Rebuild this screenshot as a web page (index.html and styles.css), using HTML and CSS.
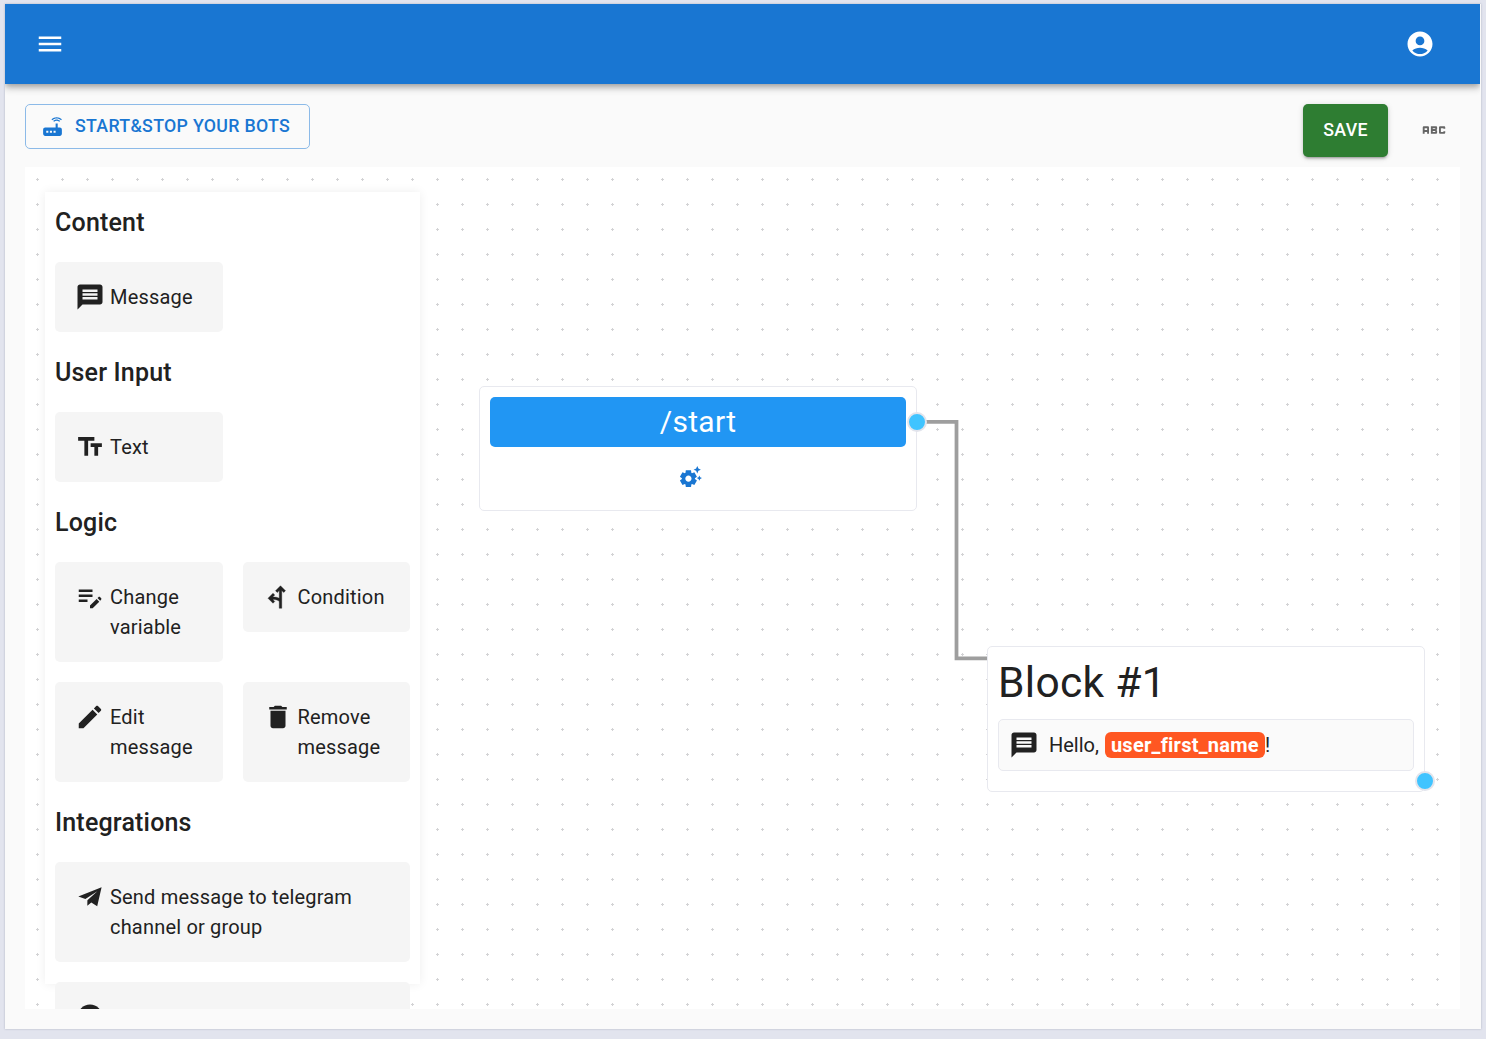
FILE: index.html
```html
<!DOCTYPE html>
<html lang="en">
<head>
<meta charset="utf-8">
<title>Bot editor</title>
<link rel="stylesheet" href="styles.css">
</head>
<body>
<svg class="sprite" aria-hidden="true">
  <symbol id="message" viewBox="0 0 24 24"><path d="M20 2H4c-1.1 0-1.99.9-1.99 2L2 22l4-4h14c1.1 0 2-.9 2-2V4c0-1.1-.9-2-2-2zm-2 12H6v-2h12v2zm0-3H6V9h12v2zm0-3H6V6h12v2z"/></symbol>
</svg>
<div class="app">
  <header class="appbar">
    <svg class="icon" viewBox="0 0 24 24"><path d="M3 18h18v-2H3v2zm0-5h18v-2H3v2zm0-7v2h18V6H3z"/></svg>
    <svg class="icon" viewBox="0 0 24 24"><path d="M12 2C6.48 2 2 6.48 2 12s4.48 10 10 10 10-4.48 10-10S17.52 2 12 2zm0 4c1.93 0 3.5 1.57 3.5 3.5S13.93 13 12 13s-3.500-1.570-3.500-3.500S10.070 6 12 6zm0 14c-2.030 0-4.430-.820-6.140-2.880C7.550 15.800 9.680 15 12 15s4.450.800 6.140 2.120C16.430 19.180 14.030 20 12 20z"/></svg>
  </header>
  <div class="toolbar">
    <button class="btn btn-outlined">
      <svg class="icon icon-sm" viewBox="0 0 24 24"><path d="M20.2 5.9l.8-.8C19.6 3.7 17.8 3 16 3s-3.6.7-5 2.100l.8.8C13 4.800 14.500 4.200 16 4.200s3 .6 4.200 1.700zm-.9.8c-.9-.9-2.100-1.400-3.300-1.400s-2.400.5-3.300 1.400l.8.8c.7-.7 1.600-1 2.500-1 .9 0 1.800.3 2.500 1l.8-.8zM19 13h-2V9h-2v4H5c-1.100 0-2 .9-2 2v4c0 1.100.9 2 2 2h14c1.100 0 2-.9 2-2v-4c0-1.100-.9-2-2-2zM8 18H6v-2h2v2zm3.500 0h-2v-2h2v2zm3.500 0h-2v-2h2v2z"/></svg>
      <span>START&amp;STOP YOUR BOTS</span>
    </button>
    <div class="actions">
      <button class="btn btn-save">SAVE</button>
      <svg class="icon icon-abc" viewBox="0 0 24 24"><path d="M21 11h-1.500v-.5h-2v3h2V13H21v1c0 .55-.45 1-1 1h-3c-.55 0-1-.45-1-1v-4c0-.55.45-1 1-1h3c.55 0 1 .45 1 1v1zM8 10v5H6.500v-1.500h-2V15H3v-5c0-.55.45-1 1-1h3c.55 0 1 .45 1 1zm-1.500.5h-2V12h2v-1.500zM13.500 12c.55 0 1 .45 1 1v1c0 .55-.45 1-1 1h-4V9h4c.55 0 1 .45 1 1v1c0 .55-.45 1-1 1zM11 10.500v.75h2v-.75h-2zm2 2.250h-2v.75h2v-.75z"/></svg>
    </div>
  </div>
  <main class="canvas">
    <svg class="grid" width="100%" height="100%">
      <defs><pattern id="dots" width="25" height="25" patternUnits="userSpaceOnUse"><path d="M12 11h1v3h-1zM11 12h3v1h-3z" fill="#d3d3d5"/></pattern></defs>
      <rect width="100%" height="100%" fill="url(#dots)"/>
    </svg>

    <aside class="panel">
      <h6>Content</h6>
      <div class="cards">
        <div class="card"><svg class="icon"><use href="#message"/></svg><span>Message</span></div>
      </div>
      <h6>User Input</h6>
      <div class="cards">
        <div class="card"><svg class="icon" viewBox="0 0 24 24"><path d="M2.500 4v3h5v12h3V7h5V4h-13zm19 5h-9v3h3v7h3v-7h3V9z"/></svg><span>Text</span></div>
      </div>
      <h6>Logic</h6>
      <div class="cards">
        <div class="card"><svg class="icon" viewBox="0 0 24 24"><path d="M3 10h11v2H3v-2zm0-2h11V6H3v2zm0 8h7v-2H3v2zm15.010-3.130.71-.71c.39-.39 1.020-.39 1.410 0l.71.71c.39.39.39 1.020 0 1.410l-.71.71-2.120-2.120zm-.71.71-5.300 5.300V21h2.120l5.300-5.300-2.120-2.120z"/></svg><span>Change variable</span></div>
        <div class="card"><svg class="icon" viewBox="0 0 24 24"><path d="M13 21V15.600C12.100 14.500 10.300 14 7.830 14l1.580 1.590L8 17l-4-4 4-4 1.410 1.410L7.830 12c2.200 0 3.900.3 5.170 1V6.830l-1.590 1.580L10 7l4-4 4 4-1.410 1.410L15 6.830V21z" stroke="currentColor" stroke-width=".3"/></svg><span>Condition</span></div>
        <div class="card"><svg class="icon" viewBox="0 0 24 24"><path d="M3 17.250V21h3.750L17.810 9.940l-3.750-3.750L3 17.250zM20.710 7.040c.39-.39.39-1.020 0-1.410l-2.340-2.340c-.39-.39-1.020-.39-1.410 0l-1.830 1.830 3.750 3.750 1.830-1.830z"/></svg><span>Edit message</span></div>
        <div class="card"><svg class="icon" viewBox="0 0 24 24"><path d="M6 19c0 1.100.9 2 2 2h8c1.100 0 2-.9 2-2V7H6v12zM19 4h-3.500l-1-1h-5l-1 1H5v2h14V4z"/></svg><span>Remove message</span></div>
      </div>
      <h6>Integrations</h6>
      <div class="cards">
        <div class="card wide"><svg class="icon" viewBox="0 0 30 30"><path d="M3.300 14.500 26.600 5.300 22.200 24.200 16.300 20.400 12.300 23.700 12.400 18.300 22.300 9.300 10.400 16.900z"/></svg><span>Send message to telegram channel or group</span></div>
        <div class="card wide"><svg class="icon" viewBox="0 0 24 24"><circle cx="12" cy="12" r="10"/></svg></div>
      </div>
    </aside>

    <svg class="edge" width="72" height="244"><path d="M0 4.800H39.500V241.300H70" fill="none" stroke="#9e9e9e" stroke-width="3.750"/></svg>

    <section class="node node-start">
      <div class="command">/start</div>
      <svg class="icon icon-sm suggest" viewBox="0 0 24 24"><path d="M17.410 6.590 15 5.500l2.410-1.090L18.500 2l1.090 2.410L22 5.500l-2.410 1.090L18.500 9l-1.090-2.410zm3.870 6.130L20.500 11l-.78 1.720-1.720.78 1.720.78.78 1.720.78-1.720L23 13.500l-1.720-.78zm-5.040 1.650 1.940 1.470-2.500 4.330-2.240-.94c-.2.13-.42.26-.64.37l-.3 2.400h-5l-.3-2.410c-.22-.11-.43-.23-.64-.37l-2.240.94-2.500-4.330 1.940-1.470c-.01-.11-.01-.24-.01-.36s0-.25.01-.37l-1.940-1.470 2.500-4.330 2.240.94c.2-.13.42-.26.64-.37L7.500 6h5l.3 2.410c.22.11.43.23.64.37l2.240-.94 2.500 4.330-1.940 1.470c.01.12.01.24.01.37s0 .24-.01.36zM13 14c0-1.660-1.340-3-3-3s-3 1.340-3 3 1.340 3 3 3 3-1.340 3-3z"/></svg>
      <i class="handle handle-start"></i>
    </section>

    <section class="node node-block">
      <h4>Block #1</h4>
      <div class="reply">
        <svg class="icon"><use href="#message"/></svg>
        <p>Hello, <b class="tag">user_first_name</b>!</p>
      </div>
      <i class="handle handle-block"></i>
    </section>
  </main>
</div>
</body>
</html>
```
FILE: styles.css
```css
* { box-sizing: border-box; }

body {
  margin: 0;
  height: 1039px;
  padding: 4px 5px 10px;
  overflow: hidden;
  background: #e2e4ee;
  color: #212121;
  font: 400 20px/30px Roboto, sans-serif;
  letter-spacing: 0.00938em;
}

h4, h6, p { margin: 0; }

.sprite { position: absolute; width: 0; height: 0; }

.app {
  height: 1025px;
  display: flex;
  flex-direction: column;
  background: #fafafa;
  box-shadow: 0 0 2px rgba(60, 64, 90, 0.3);
}

.icon { width: 30px; height: 30px; flex: none; fill: currentColor; }
.icon-sm { width: 25px; height: 25px; }

.appbar {
  height: 80px;
  flex: none;
  margin-right: 1px;
  padding: 0 45px 0 30px;
  display: flex;
  align-items: center;
  justify-content: space-between;
  background: #1976d2;
  color: #fff;
  box-shadow: 0 2.5px 5px -1px rgba(0, 0, 0, 0.2), 0 5px 6px rgba(0, 0, 0, 0.14), 0 1px 12px rgba(0, 0, 0, 0.12);
  clip-path: inset(0 0 -30px 0);
}

.toolbar {
  height: 83px;
  flex: none;
  padding: 20px 32px 0 20px;
  display: flex;
  align-items: flex-start;
  justify-content: space-between;
}

.actions { display: flex; align-items: center; gap: 31px; }

.btn {
  display: flex;
  align-items: center;
  justify-content: center;
  border: 0;
  border-radius: 5px;
  font: 500 17.75px/33px Roboto, sans-serif;
  letter-spacing: 0.3px;
  white-space: nowrap;
}

.btn-outlined {
  width: 285px;
  height: 45px;
  gap: 10px;
  padding: 0 0 0 14px;
  justify-content: flex-start;
  border: 1px solid #8cbae8;
  background: transparent;
  color: #1976d2;
}

.btn-save {
  width: 85px;
  height: 53px;
  background: #2e7d32;
  color: #fff;
  box-shadow: 0 3px 2px -2px rgba(0, 0, 0, 0.2), 0 2px 3px rgba(0, 0, 0, 0.14), 0 1px 6px rgba(0, 0, 0, 0.12);
}

.icon-abc { margin-bottom: 2px; color: #666; }

.canvas {
  position: relative;
  width: 1435px;
  height: 842px;
  margin-left: 20px;
  overflow: hidden;
  background: #fff;
}

.grid { position: absolute; inset: 0; }

.panel {
  position: relative;
  width: 375px;
  height: 792px;
  margin: 25px 0 0 20px;
  padding: 10px;
  background: #fff;
  box-shadow: 0 0 10px rgba(0, 0, 0, 0.07);
}

h6 {
  height: 40px;
  font-size: 25px;
  font-weight: 500;
  line-height: 42px;
  letter-spacing: 0.0075em;
}

.cards {
  display: grid;
  grid-template-columns: 1fr 1fr;
  align-items: start;
  gap: 20px;
  padding: 20px 0;
}

.card {
  display: flex;
  gap: 5px;
  padding: 20px;
  border-radius: 5px;
  background: #f5f5f5;
}

.wide { grid-column: span 2; min-height: 100px; }

.edge { position: absolute; left: 892px; top: 250px; }

.node {
  position: absolute;
  width: 438px;
  padding: 10px;
  border: 1px solid #e8e9ef;
  border-radius: 5px;
  background: #fff;
}

.node-start {
  left: 454px;
  top: 219px;
  height: 125px;
  display: flex;
  flex-direction: column;
  align-items: center;
}

.command {
  width: 416px;
  height: 50px;
  border-radius: 5px;
  background: #2196f3;
  color: #fff;
  font-size: 30px;
  line-height: 50px;
  letter-spacing: 0.3px;
  text-align: center;
}

.suggest { margin: 17px 16px 0 0; color: #1976d2; }

.node-block { left: 962px; top: 479px; height: 146px; }

h4 {
  font-size: 42.5px;
  font-weight: 400;
  line-height: 52px;
  letter-spacing: 0.00735em;
}

.reply {
  height: 52px;
  margin-top: 10px;
  padding: 0 10px;
  display: flex;
  align-items: center;
  gap: 10px;
  border: 1px solid #e8e9ef;
  border-radius: 5px;
  background: #fafafa;
}

.reply p { letter-spacing: 0; }

.tag {
  margin-left: 1px;
  padding: 1px 6px;
  border-radius: 6px;
  background: #ff5722;
  color: #fff;
  font-weight: 700;
  letter-spacing: 0.25px;
}

.handle {
  position: absolute;
  width: 20px;
  height: 20px;
  border: 2px solid #e2e4ec;
  border-radius: 50%;
  background: #40c4ff;
}

.handle-start { right: -11px; top: 25px; }
.handle-block { right: -11px; bottom: 0; }
```
